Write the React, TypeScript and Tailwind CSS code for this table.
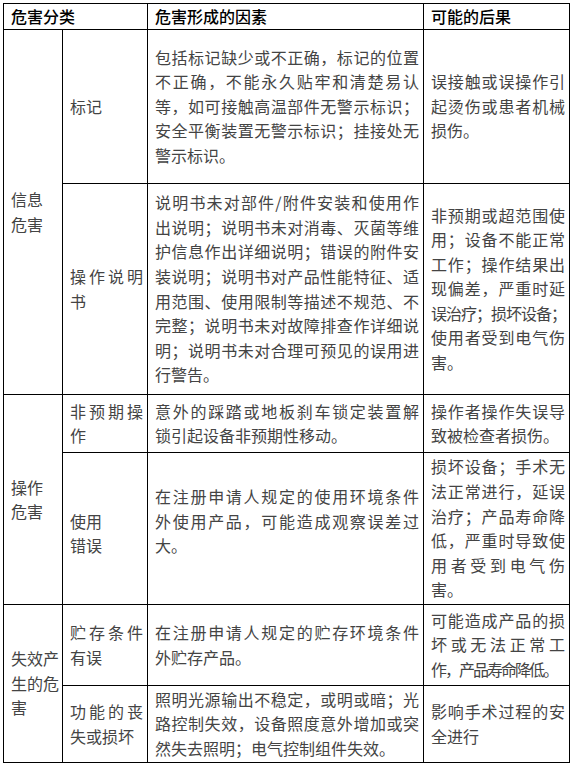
import React from 'react';

type Ln = string | { t: string; cls: string };

function Lines({ lines, spread = true }: { lines: Ln[]; spread?: boolean }) {
  return (
    <>
      {lines.map((ln, i) => {
        const text = typeof ln === 'string' ? ln : ln.t;
        const extra = typeof ln === 'string' ? '' : ln.cls;
        const isLast = i === lines.length - 1;
        return (
          <div
            key={i}
            className={`${spread && !isLast ? '[text-align-last:justify] text-justify' : 'text-left'} ${extra}`}
          >
            {text}
          </div>
        );
      })}
    </>
  );
}

const cell = 'border border-black align-middle pl-[7px] pr-[4px] leading-[24.6px]';
const first = 'border border-black align-middle pl-[7px] pr-0 leading-[24.6px] whitespace-nowrap';
const tight = 'tracking-[-2px]';

export default function App() {
  return (
    <div className="w-[571px] h-[764px] bg-white pt-[3px] pl-[3px]">
      <table
        className="table-fixed border-collapse w-[566px] text-[16px] text-[#444]"
        style={{ fontFamily: '"Noto Sans CJK SC", "Noto Sans", sans-serif' }}
      >
        <colgroup>
          <col className="w-[59px]" />
          <col className="w-[85px]" />
          <col className="w-[276px]" />
          <col className="w-[146px]" />
        </colgroup>
        <tbody>
          {/* header */}
          <tr className="h-[25px]">
            <td colSpan={2} className={`${cell} text-black font-medium leading-[22px]`}>
              危害分类
            </td>
            <td className={`${cell} text-black font-medium leading-[22px]`}>危害形成的因素</td>
            <td className={`${cell} text-black font-medium leading-[22px]`}>可能的后果</td>
          </tr>

          {/* 信息危害 */}
          <tr className="h-[154px]">
            <td rowSpan={2} className={first}>
              <Lines lines={['信息', '危害']} spread={false} />
            </td>
            <td className={cell}>标记</td>
            <td className={cell}>
              <Lines
                lines={[
                  '包括标记缺少或不正确，标记的位置',
                  '不正确，不能永久贴牢和清楚易认',
                  '等，如可接触高温部件无警示标识；',
                  '安全平衡装置无警示标识；挂接处无',
                  '警示标识。',
                ]}
              />
            </td>
            <td className={cell}>
              <Lines lines={['误接触或误操作引', '起烫伤或患者机械', '损伤。']} />
            </td>
          </tr>
          <tr className="h-[211px]">
            <td className={cell}>
              <Lines lines={['操作说明', '书']} />
            </td>
            <td className={cell}>
              <Lines
                lines={[
                  '说明书未对部件/附件安装和使用作',
                  '出说明；说明书未对消毒、灭菌等维',
                  '护信息作出详细说明；错误的附件安',
                  '装说明；说明书对产品性能特征、适',
                  '用范围、使用限制等描述不规范、不',
                  '完整；说明书未对故障排查作详细说',
                  '明；说明书未对合理可预见的误用进',
                  '行警告。',
                ]}
              />
            </td>
            <td className={cell}>
              <Lines
                lines={[
                  '非预期或超范围使',
                  '用；设备不能正常',
                  '工作；操作结果出',
                  '现偏差，严重时延',
                  { t: '误治疗；损坏设备；', cls: tight },
                  '使用者受到电气伤',
                  '害。',
                ]}
              />
            </td>
          </tr>

          {/* 操作危害 */}
          <tr className="h-[58px]">
            <td rowSpan={2} className={first}>
              <Lines lines={['操作', '危害']} spread={false} />
            </td>
            <td className={cell}>
              <Lines lines={['非预期操', '作']} />
            </td>
            <td className={cell}>
              <Lines lines={['意外的踩踏或地板刹车锁定装置解', '锁引起设备非预期性移动。']} />
            </td>
            <td className={cell}>
              <Lines lines={['操作者操作失误导', '致被检查者损伤。']} />
            </td>
          </tr>
          <tr className="h-[152px]">
            <td className={`${cell} pt-[10px]`}>
              <Lines lines={['使用', '错误']} spread={false} />
            </td>
            <td className={`${cell} pb-[14px]`}>
              <Lines
                lines={['在注册申请人规定的使用环境条件', '外使用产品，可能造成观察误差过', '大。']}
              />
            </td>
            <td className={cell}>
              <Lines
                lines={[
                  '损坏设备；手术无',
                  '法正常进行，延误',
                  '治疗；产品寿命降',
                  '低，严重时导致使',
                  '用者受到电气伤',
                  '害。',
                ]}
              />
            </td>
          </tr>

          {/* 失效产生的危害 */}
          <tr className="h-[81px]">
            <td rowSpan={2} className={first}>
              <Lines lines={['失效产', '生的危', '害']} spread={false} />
            </td>
            <td className={cell}>
              <Lines lines={['贮存条件', '有误']} />
            </td>
            <td className={cell}>
              <Lines lines={['在注册申请人规定的贮存环境条件', '外贮存产品。']} />
            </td>
            <td className={cell}>
              <Lines
                lines={['可能造成产品的损', '坏或无法正常工', { t: '作，产品寿命降低。', cls: tight }]}
              />
            </td>
          </tr>
          <tr className="h-[77px]">
            <td className={cell}>
              <Lines lines={['功能的丧', '失或损坏']} />
            </td>
            <td className={cell}>
              <Lines
                lines={[
                  '照明光源输出不稳定，或明或暗；光',
                  '路控制失效，设备照度意外增加或突',
                  '然失去照明；电气控制组件失效。',
                ]}
              />
            </td>
            <td className={cell}>
              <Lines lines={['影响手术过程的安', '全进行']} />
            </td>
          </tr>
        </tbody>
      </table>
    </div>
  );
}
